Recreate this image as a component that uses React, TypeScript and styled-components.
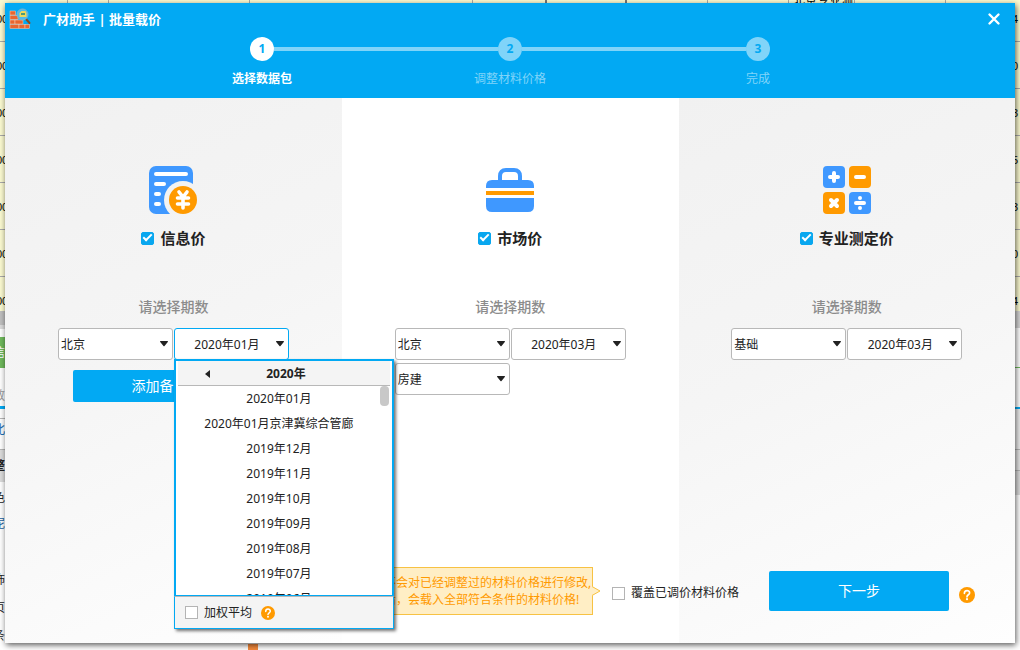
import React from "react";
import styled, { createGlobalStyle, css } from "styled-components";

const blue = "#02a9f3";
const orange = "#ff9a00";
const iconBlue = "#3f98ff";

const GlobalStyle = createGlobalStyle`
  *, *::before, *::after { box-sizing: border-box; }
  body {
    margin: 0;
    font-family: "Noto Sans", "Noto Sans CJK SC", sans-serif;
    font-size: 12px;
    line-height: 20px;
    color: #222;
  }
  button, select, input { font: inherit; color: inherit; margin: 0; }
`;

/* ---------- worksheet behind the dialog ---------- */

const Screen = styled.div`
  position: relative;
  min-height: 100vh;
  padding: 3px 5px 7px;
  display: flex;
  overflow: hidden;
`;

const Backdrop = styled.div`
  position: absolute;
  inset: 0;
  overflow: hidden;
  background: #fff;
`;

const SheetRow = styled.div<{ $first?: boolean }>`
  height: ${(p) => (p.$first ? 42 : 47)}px;
  padding: ${(p) => (p.$first ? 0 : 5)}px 2px 0 0;
  display: flex;
  align-items: ${(p) => (p.$first ? "stretch" : "flex-start")};
  background: #fbfad0;
  border-bottom: 1px solid #a9a9a9;
  font: 11px/38px "Liberation Sans", "Noto Sans CJK SC", sans-serif;
  color: #000;
  overflow: hidden;
  &:nth-child(7) { height: 34px; border-bottom: 0; }
`;

const SheetCell = styled.span<{ $w: number; $dark?: boolean }>`
  width: ${(p) => p.$w}px;
  flex: none;
  border-right: ${(p) => (p.$dark ? "2px solid #777" : "1px solid #a9a9a9")};
  font-size: 12px;
  line-height: 2px;
  padding-left: 4px;
  white-space: nowrap;
`;

const RowStart = styled.span`
  width: 8px;
  flex: none;
  text-indent: -4px;
`;

const RowEnd = styled.span`
  margin-left: auto;
`;

const Strips = styled.div`
  display: flex;
  justify-content: space-between;
`;

const Strip = styled.div`
  flex: 1;
`;

const Band = styled.div<{ $h: number; $bg: string; $color?: string; $bold?: boolean }>`
  height: ${(p) => p.$h}px;
  background: ${(p) => p.$bg};
  color: ${(p) => p.$color || "#222"};
  font-weight: ${(p) => (p.$bold ? 700 : 400)};
  line-height: ${(p) => p.$h}px;
  text-indent: -7px;
  overflow: hidden;
`;

const Flag = styled.div`
  width: 10px;
  height: 9px;
  margin-left: 248px;
  background: #f58a3c;
`;

type BandData = [number, string, string?, string?, boolean?];

const leftBands: BandData[] = [
  [14, "#bfbfbf"], [4, "#dcdcdc"], [8, "#fff"], [31, "#6fb95c", "信息", "#fff"],
  [18, "#fff"], [20, "#fff", "数", "#999"], [3, blue], [9, "#fff"], [1, "#b5b5b5"],
  [22, "#fff", "北", "#1b6fb5"], [8, "#fff"], [1, "#b5b5b5"], [32, "#dcdcdc", "整", "#222", true],
  [32, "#fff", "色"], [20, "#fff", "泥", "#1b5fa0"], [36, "#fff"], [20, "#fff", "饰"],
  [8, "#fff"], [20, "#fff", "页"], [10, "#fff"], [16, "#fff", "条"],
];

const rightBands: BandData[] = [
  [17, "#d6d6d6"], [39, "#fff"], [1, "#6fb95c"], [39, "#fff"], [2, blue],
  [40, "#ececec"], [1, "#b5b5b5"], [20, "#e6e6e6"], [1, "#b5b5b5"], [24, "#dcdcdc"], [166, "#fff"],
];

const topCells: [number, boolean, string?][] = [
  [60, false], [41, false], [141, false], [223, false], [74, true],
  [80, true], [81, false], [81, false], [66, false, "北京专业测"], [91, false],
];

const Worksheet = () => (
  <Backdrop aria-hidden="true">
    <SheetRow $first>
      <RowStart>00</RowStart>
      {topCells.map(([w, dark, text], i) => (
        <SheetCell key={i} $w={w} $dark={dark}>{text}</SheetCell>
      ))}
      <RowEnd>4</RowEnd>
    </SheetRow>
    {["0", "3", "5", "3", "0", "4"].map((n, i) => (
      <SheetRow key={i}><RowStart>00</RowStart><RowEnd>{n}</RowEnd></SheetRow>
    ))}
    <Strips>
      {[leftBands, rightBands].map((bands, s) => (
        <Strip key={s}>
          {bands.map(([h, bg, text, color, bold], i) => (
            <Band key={i} $h={h} $bg={bg} $color={color} $bold={bold}>{text}</Band>
          ))}
          {s === 0 && <Flag />}
        </Strip>
      ))}
    </Strips>
  </Backdrop>
);

/* ---------- dialog frame ---------- */

const Dialog = styled.main`
  position: relative;
  flex: 1;
  display: flex;
  flex-direction: column;
  background: #fff;
  box-shadow: 1px 2px 6px rgba(0, 0, 0, 0.65);
`;

const Header = styled.header`
  background: ${blue};
  color: #fff;
  padding-bottom: 9px;
`;

const TitleBar = styled.div`
  height: 32px;
  margin-bottom: 2px;
  display: flex;
  align-items: center;
  gap: 12px;
  padding: 0 10px 0 4px;
`;

const Title = styled.h1`
  margin: 0;
  flex: 1;
  font-size: 13px;
  font-weight: 700;
`;

const CloseButton = styled.button`
  display: flex;
  padding: 4px;
  border: 0;
  background: none;
  cursor: pointer;
`;

const Steps = styled.ol`
  list-style: none;
  margin: 0 auto;
  padding: 0;
  width: 744px;
  max-width: 100%;
  display: grid;
  grid-template-columns: repeat(3, 1fr);
`;

const Step = styled.li<{ $active?: boolean }>`
  display: flex;
  flex-direction: column;
  align-items: center;
  gap: 8px;
  color: ${(p) => (p.$active ? "#fff" : "#80d4f9")};
  font-weight: ${(p) => (p.$active ? 700 : 400)};
`;

const Track = styled.div`
  align-self: stretch;
  display: flex;
  align-items: center;
`;

const Rail = styled.span<{ $hidden?: boolean }>`
  flex: 1;
  height: 4px;
  background: ${(p) => (p.$hidden ? "transparent" : "#80d4f9")};
`;

const Dot = styled.span`
  width: 24px;
  height: 24px;
  border-radius: 50%;
  background: currentColor;
  display: flex;
  align-items: center;
  justify-content: center;
`;

const DotNumber = styled.span`
  color: ${blue};
  font-weight: 700;
`;

/* ---------- form parts ---------- */

const CheckInput = styled.input`
  appearance: none;
  flex: none;
  width: 13px;
  height: 13px;
  border: 1px solid #b4b4b4;
  background: #fff;
  display: grid;
  place-content: center;
  &:checked {
    border-color: #09a7ef;
    border-radius: 2px;
    background: #09a7ef;
  }
  &:checked::after {
    content: "";
    width: 9px;
    height: 5px;
    margin-bottom: 3px;
    border: solid #fff;
    border-width: 0 0 2px 2px;
    transform: rotate(-45deg);
  }
`;

const CheckLabel = styled.label<{ $heading?: boolean }>`
  display: flex;
  align-items: center;
  gap: 6px;
  white-space: nowrap;
  ${(p) => p.$heading && css`font-size: 15px; font-weight: 700;`}
`;

const SelectBox = styled.div`
  position: relative;
  width: 115px;
  display: grid;
  align-items: center;
`;

const SelectInput = styled.select<{ $centered?: boolean; $open?: boolean }>`
  grid-area: 1 / 1;
  appearance: none;
  width: 100%;
  height: 32px;
  padding: 2px ${(p) => (p.$centered ? "9px 0 0" : "20px 0 2px")};
  border: 1px solid ${(p) => (p.$open ? blue : "#b8b8b8")};
  border-radius: 3px;
  background: #fff;
  text-align-last: ${(p) => (p.$centered ? "center" : "left")};
`;

const Arrow = styled.svg`
  grid-area: 1 / 1;
  justify-self: end;
  margin-right: 5px;
  pointer-events: none;
`;

const ActionButton = styled.button<{ $large?: boolean }>`
  width: ${(p) => (p.$large ? 180 : 200)}px;
  height: ${(p) => (p.$large ? 40 : 32)}px;
  border: 0;
  border-radius: 2px;
  background: ${blue};
  color: #fff;
  font-size: 14px;
  cursor: pointer;
`;

const HelpButton = styled.button`
  display: flex;
  padding: 0;
  border: 0;
  background: none;
  cursor: pointer;
`;

/* ---------- columns ---------- */

const Body = styled.div`
  flex: 1;
  display: grid;
`;

const Columns = styled.div`
  grid-area: 1 / 1;
  display: grid;
  grid-template-columns: 1fr 1fr 33.3%;
`;

const Column = styled.section<{ $plain?: boolean }>`
  display: flex;
  flex-direction: column;
  align-items: center;
  padding-top: 68px;
  background: ${(p) => (p.$plain ? "#fff" : "linear-gradient(155deg, #f1f1f1, #f5f5f5 45%, #fefefe)")};
`;

const ColumnTitle = styled.h2`
  margin: 14px 0 49px;
  line-height: 20px;
`;

const Hint = styled.p`
  margin: 0 0 11px;
  font-size: 14px;
  font-weight: 500;
  color: #8c8c8c;
`;

const Fields = styled.div`
  display: grid;
  grid-template-columns: 115px 115px;
  gap: 3px 1px;
  margin-bottom: 10px;
`;

/* ---------- period menu ---------- */

const Menu = styled.div`
  position: absolute;
  z-index: 2;
  top: 31px;
  left: 0;
  width: 220px;
  height: 270px;
  display: flex;
  flex-direction: column;
  box-shadow: 2px 2px 3px rgba(0, 0, 0, 0.55);
`;

const MenuMain = styled.div`
  flex: 1;
  min-height: 0;
  display: flex;
  flex-direction: column;
  padding: 0 2px;
  border: 2px solid ${blue};
  border-bottom-width: 1px;
  background: #fff;
`;

const MenuHead = styled.div`
  height: 25px;
  padding-top: 2px;
  display: grid;
  grid-template-columns: 60px 1fr 56px;
  align-items: center;
  background: #f4f4f4;
  border-bottom: 1px solid #b8b8b8;
  font-weight: 700;
  text-align: center;
`;

const PrevButton = styled.button`
  display: flex;
  justify-content: center;
  padding: 4px;
  border: 0;
  background: none;
`;

const MenuScroll = styled.div`
  flex: 1;
  min-height: 0;
  display: flex;
  overflow: hidden;
`;

const MenuList = styled.ul`
  flex: 1;
  list-style: none;
  margin: 0;
  padding: 0;
`;

const MenuItem = styled.li`
  height: 25px;
  line-height: 25px;
  text-align: center;
`;

const Thumb = styled.div`
  width: 9px;
  height: 20px;
  margin-right: 1px;
  border-radius: 4px;
  background: #c8c8c8;
`;

const MenuFoot = styled.div`
  height: 33px;
  display: flex;
  align-items: center;
  gap: 9px;
  padding: 0 10px;
  background: #f4f4f4;
  border: 1px solid ${blue};
  border-top-color: #b8b8b8;
`;

/* ---------- footer ---------- */

const Footer = styled.footer`
  grid-area: 1 / 1;
  align-self: end;
  display: flex;
  justify-content: flex-end;
  align-items: center;
  padding: 0 40px 28px 0;
`;

const Tip = styled.p`
  position: relative;
  margin: 0 19px 0 0;
  width: 219px;
  padding: 6px 0 6px 9px;
  border: 1px solid #f7c243;
  background: #ffeec5;
  color: ${orange};
  line-height: 17px;
  white-space: nowrap;
`;

const TipPointer = styled.svg`
  position: absolute;
  left: 100%;
  top: 18px;
`;

const Overwrite = styled.div`
  padding-top: 4px;
`;

const NextGroup = styled.div`
  display: flex;
  align-items: center;
  gap: 10px;
  margin-left: 30px;
`;

const NextHelp = styled.div`
  padding-top: 8px;
`;

/* ---------- drawings ---------- */

const HelpIcon = ({ size }: { size: number }) => (
  <svg width={size} height={size} viewBox="0 0 16 16">
    <circle cx="8" cy="8" r="8" fill={orange} />
    <path d="M5.4 6.3C5.4 2.6 10.7 2.8 10.6 6C10.5 7.8 8 7.8 8 9.8" fill="none" stroke="#fff" strokeWidth="1.7" strokeLinecap="round" />
    <circle cx="8" cy="12.2" r="1.1" fill="#fff" />
  </svg>
);

const WallIcon = () => (
  <svg width="22" height="22" viewBox="0 0 22 22">
    <g fill="#e9652f" stroke="#fbd0b5" strokeWidth=".5">
      <rect x="1" y="3" width="5.5" height="4" /><rect x="1" y="7.5" width="8" height="4" />
      <rect x="1" y="12" width="5" height="4" /><rect x="6" y="12" width="8" height="4" />
      <rect x="1" y="16.5" width="9" height="4" /><rect x="10" y="16.5" width="6" height="4" /><rect x="16" y="16.5" width="4.5" height="4" />
    </g>
    <path d="M17 11l3.5 4" stroke="#8b4b21" strokeWidth="2" strokeLinecap="round" />
    <circle cx="13.5" cy="6.5" r="5.5" fill="#52bce9" stroke="#80b5cd" />
    <path d="M10.5 5l2-2h4l1 2v4h-7z" fill="#f0d85b" />
    <path d="M12 5h4v2h-4z" fill="#4e9c76" />
  </svg>
);

const PriceListIcon = () => (
  <svg width="48" height="48" viewBox="0 0 48 48">
    <rect width="44" height="48" rx="7" fill={iconBlue} />
    <path d="M7 8H37M7 18H15M7 28H10M7 38H10" stroke="#fff" strokeWidth="4" strokeLinecap="round" />
    <circle cx="34" cy="34" r="19" fill="#f3f3f3" />
    <circle cx="34" cy="34" r="14" fill={orange} />
    <path d="M30 26L34 31L38 26M28.5 32H39.5M28.5 38H39.5M34 31V42" fill="none" stroke="#fff" strokeWidth="3.6" strokeLinecap="round" />
  </svg>
);

const CaseIcon = () => (
  <svg width="48" height="48" viewBox="0 0 48 48">
    <path d="M14 15V10C14 6.5 16 4 20 4H28C32 4 34 6.5 34 10V15" fill="none" stroke={iconBlue} strokeWidth="4" />
    <path d="M0 22V20Q0 14 6 14H42Q48 14 48 20V22Z" fill={iconBlue} />
    <path d="M0 25H48V29H0Z" fill={orange} />
    <path d="M0 32H48V40Q48 46 42 46H6Q0 46 0 40Z" fill={iconBlue} />
  </svg>
);

const CalcIcon = () => (
  <svg width="48" height="48" viewBox="0 0 48 48">
    <rect width="22" height="22" rx="4" fill={iconBlue} />
    <rect x="26" width="22" height="22" rx="4" fill={orange} />
    <rect y="26" width="22" height="22" rx="4" fill={orange} />
    <rect x="26" y="26" width="22" height="22" rx="4" fill={iconBlue} />
    <path d="M7 11H15M11 7V15M33 11H41M8 34L14 40M14 34L8 40M33 37H41" stroke="#fff" strokeWidth="4" strokeLinecap="round" />
    <circle cx="37" cy="32" r="2" fill="#fff" />
    <circle cx="37" cy="42" r="2" fill="#fff" />
  </svg>
);

/* ---------- composition ---------- */

type SelectProps = { label: string; value: string; centered?: boolean; open?: boolean; children?: React.ReactNode };

const Select = ({ label, value, centered, open, children }: SelectProps) => (
  <SelectBox>
    <SelectInput aria-label={label} $centered={centered} $open={open}>
      <option>{value}</option>
    </SelectInput>
    <Arrow width="8" height="6" viewBox="0 0 8 6"><path d="M.5 0H7.5Q8.3 .5 7.8 1L4.5 5Q4 5.5 3.5 5L.2 1Q-.3 .5 .5 0Z" fill="#222" /></Arrow>
    {children}
  </SelectBox>
);

const periods = [
  "2020年01月", "2020年01月京津冀综合管廊", "2019年12月", "2019年11月", "2019年10月",
  "2019年09月", "2019年08月", "2019年07月", "2019年06月",
];

const PeriodMenu = () => (
  <Menu>
    <MenuMain>
      <MenuHead>
        <PrevButton aria-label="上一年">
          <svg width="5" height="8" viewBox="0 0 5 8"><path d="M5 0V8L0 4Z" fill="#222" /></svg>
        </PrevButton>
        <span>2020年</span>
      </MenuHead>
      <MenuScroll>
        <MenuList>{periods.map((p) => <MenuItem key={p}>{p}</MenuItem>)}</MenuList>
        <Thumb />
      </MenuScroll>
    </MenuMain>
    <MenuFoot>
      <CheckLabel><CheckInput type="checkbox" />加权平均</CheckLabel>
      <HelpButton aria-label="加权平均说明"><HelpIcon size={14} /></HelpButton>
    </MenuFoot>
  </Menu>
);

type SourceProps = { icon: React.ReactNode; name: string; plain?: boolean; children: React.ReactNode };

const Source = ({ icon, name, plain, children }: SourceProps) => (
  <Column $plain={plain}>
    {icon}
    <ColumnTitle>
      <CheckLabel $heading><CheckInput type="checkbox" defaultChecked />{name}</CheckLabel>
    </ColumnTitle>
    <Hint>请选择期数</Hint>
    {children}
  </Column>
);

const steps = ["选择数据包", "调整材料价格", "完成"];

export default function App() {
  return (
    <Screen>
      <GlobalStyle />
      <Worksheet />
      <Dialog>
        <Header>
          <TitleBar>
            <WallIcon />
            <Title>广材助手 | 批量载价</Title>
            <CloseButton aria-label="关闭">
              <svg width="14" height="14" viewBox="0 0 14 14"><path d="M2.5 2.5L11.5 11.5M11.5 2.5L2.5 11.5" stroke="#fff" strokeWidth="2.4" strokeLinecap="round" /></svg>
            </CloseButton>
          </TitleBar>
          <Steps>
            {steps.map((s, i) => (
              <Step key={s} $active={i === 0}>
                <Track>
                  <Rail $hidden={i === 0} />
                  <Dot><DotNumber>{i + 1}</DotNumber></Dot>
                  <Rail $hidden={i === steps.length - 1} />
                </Track>
                <span>{s}</span>
              </Step>
            ))}
          </Steps>
        </Header>
        <Body>
          <Columns>
            <Source icon={<PriceListIcon />} name="信息价">
              <Fields>
                <Select label="地区" value="北京" />
                <Select label="期数" value="2020年01月" centered open><PeriodMenu /></Select>
              </Fields>
              <ActionButton>添加备选地区</ActionButton>
            </Source>
            <Source icon={<CaseIcon />} name="市场价" plain>
              <Fields>
                <Select label="地区" value="北京" />
                <Select label="期数" value="2020年03月" centered />
                <Select label="类别" value="房建" />
              </Fields>
            </Source>
            <Source icon={<CalcIcon />} name="专业测定价">
              <Fields>
                <Select label="类别" value="基础" />
                <Select label="期数" value="2020年03月" centered />
              </Fields>
            </Source>
          </Columns>
          <Footer>
            <Tip>
              不会对已经调整过的材料价格进行修改,<br />后，会载入全部符合条件的材料价格!
              <TipPointer width="9" height="10" viewBox="0 0 9 10">
                <path d="M0 0V10L8 5Z" fill="#ffeec5" /><path d="M0 .5L8 5L0 9.5" fill="none" stroke="#f7c243" />
              </TipPointer>
            </Tip>
            <Overwrite>
              <CheckLabel><CheckInput type="checkbox" />覆盖已调价材料价格</CheckLabel>
            </Overwrite>
            <NextGroup>
              <ActionButton $large>下一步</ActionButton>
              <NextHelp>
                <HelpButton aria-label="帮助"><HelpIcon size={16} /></HelpButton>
              </NextHelp>
            </NextGroup>
          </Footer>
        </Body>
      </Dialog>
    </Screen>
  );
}
